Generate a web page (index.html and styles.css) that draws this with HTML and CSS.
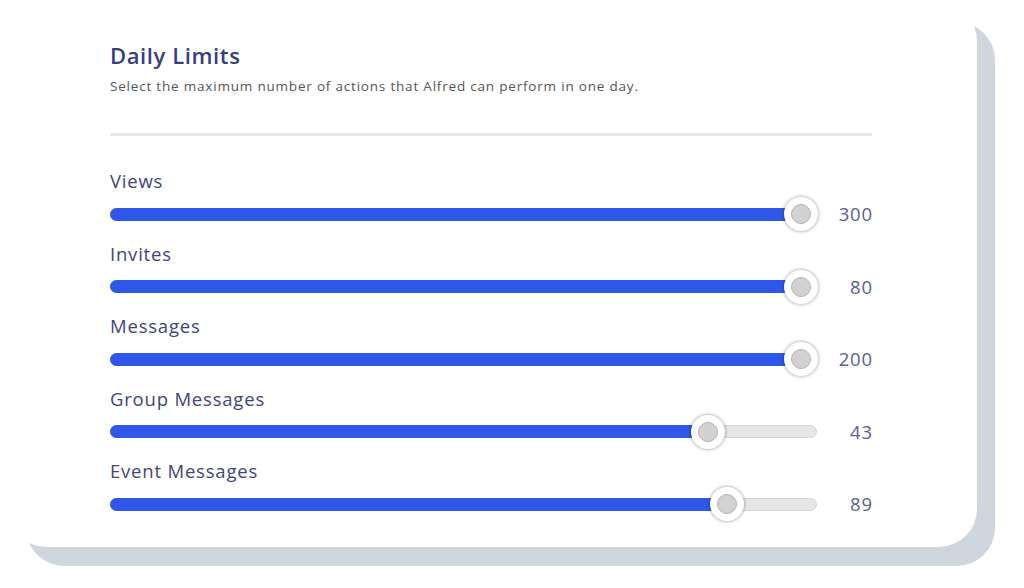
FILE: index.html
```html
<!DOCTYPE html>
<html lang="en">
<head>
<meta charset="utf-8">
<title>Daily Limits</title>
<link rel="stylesheet" href="styles.css">
</head>
<body>
<div class="card">
  <h1 class="title">Daily Limits</h1>
  <p class="subtitle">Select the maximum number of actions that Alfred can perform in one day.</p>
  <div class="divider"></div>
  <div class="limits">
    <div class="limit">
      <div class="label">Views</div>
      <div class="slider-row">
        <div class="track"><div class="fill" style="width:690px"></div><div class="thumb" style="left:690px"></div></div>
        <div class="value">300</div>
      </div>
    </div>
    <div class="limit">
      <div class="label">Invites</div>
      <div class="slider-row">
        <div class="track"><div class="fill" style="width:690px"></div><div class="thumb" style="left:690px"></div></div>
        <div class="value">80</div>
      </div>
    </div>
    <div class="limit">
      <div class="label">Messages</div>
      <div class="slider-row">
        <div class="track"><div class="fill" style="width:690px"></div><div class="thumb" style="left:690px"></div></div>
        <div class="value">200</div>
      </div>
    </div>
    <div class="limit">
      <div class="label">Group Messages</div>
      <div class="slider-row">
        <div class="track"><div class="fill" style="width:597px"></div><div class="thumb" style="left:597px"></div></div>
        <div class="value">43</div>
      </div>
    </div>
    <div class="limit">
      <div class="label">Event Messages</div>
      <div class="slider-row">
        <div class="track"><div class="fill" style="width:616px"></div><div class="thumb" style="left:616px"></div></div>
        <div class="value">89</div>
      </div>
    </div>
  </div>
</div>
</body>
</html>
```
FILE: styles.css
```css
html, body {
  margin: 0;
  padding: 0;
  background: #ffffff;
}
body {
  box-sizing: border-box;
  min-height: 588px;
  padding: 3px 0 0 8px;
  font-family: "Open Sans", "Noto Sans", sans-serif;
}
.card {
  box-sizing: border-box;
  width: 969px;
  height: 544px;
  background: #ffffff;
  border-radius: 38px;
  box-shadow: 18px 19px 0 #cfd6de;
  padding: 38px 0 0 102px;
}
.title {
  margin: 0;
  font-size: 22px;
  line-height: 28px;
  font-weight: 600;
  letter-spacing: 0.6px;
  color: #383d86;
}
.subtitle {
  margin: 8px 0 0;
  font-size: 13.5px;
  line-height: 18px;
  letter-spacing: 0.8px;
  color: #565656;
}
.divider {
  width: 762px;
  height: 3px;
  background: #e7e8ec;
  margin-top: 38px;
}
.limits {
  margin-top: 35px;
  width: 762px;
}
.limit {
  height: 72.5px;
}
.label {
  font-size: 18.5px;
  line-height: 20px;
  letter-spacing: 0.8px;
  color: #3f4482;
}
.slider-row {
  margin-top: 6px;
  height: 34px;
  display: flex;
  align-items: center;
  justify-content: space-between;
}
.track {
  position: relative;
  box-sizing: border-box;
  width: 707px;
  height: 13px;
  border-radius: 7px;
  background: #e6e6e6;
  border: 1px solid #d6d6d6;
}
.fill {
  position: absolute;
  left: -1px;
  top: -1px;
  height: 13px;
  border-radius: 7px 0 0 7px;
  background: #2f57e9;
}
.thumb {
  position: absolute;
  top: 50%;
  width: 34px;
  height: 34px;
  margin: -17px 0 0 -17px;
  border-radius: 50%;
  background: #ffffff;
  box-shadow: 0 0 3px 1px rgba(0, 0, 0, 0.25);
  display: flex;
  align-items: center;
  justify-content: center;
}
.thumb::after {
  content: "";
  box-sizing: border-box;
  width: 20px;
  height: 20px;
  border-radius: 50%;
  background: #d2d2d2;
  border: 1px solid #b3b3b3;
}
.value {
  font-size: 18.5px;
  line-height: 20px;
  letter-spacing: 0.8px;
  margin-right: -0.8px;
  color: #595e9c;
  text-align: right;
}
```
